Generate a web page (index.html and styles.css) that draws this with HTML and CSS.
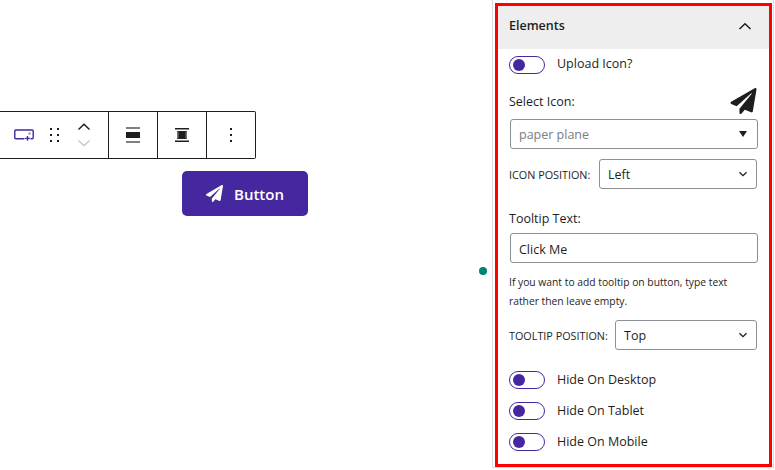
FILE: index.html
```html
<!DOCTYPE html>
<html lang="en">
<head>
<meta charset="utf-8">
<title>Button block editor</title>
<link rel="stylesheet" href="styles.css">
</head>
<body>
<div class="page">
  <main class="canvas">
    <div class="toolbar">
      <div class="tool-group tool-first">
        <svg class="ic-block" width="20" height="12" viewBox="0 0 20 12"><path d="M10.500 9.700H1.800q-1 0-1-1V2q0-1 1-1h16.400q1 0 1 1v6.700q0 1-1 1H16.500" fill="none" stroke="#4527a0" stroke-width="1.400"/><path d="M13.500 7v4.800M11.100 9.400h4.800" stroke="#4527a0" stroke-width="1.400"/><rect x="14.500" y="3.500" width="2" height="2" fill="#8d7cc0"/></svg>
        <svg class="ic-drag" width="9" height="14" viewBox="0 0 9 14"><path d="M0 0h2v2H0zM7 0h2v2H7zM0 6h2v2H0zM7 6h2v2H7zM0 12h2v2H0zM7 12h2v2H7z" fill="#1e1e1e"/></svg>
        <div class="movers">
          <svg width="14" height="8" viewBox="0 0 14 8"><path d="M1.500 6.500 7 1.300l5.500 5.200" fill="none" stroke="#1e1e1e" stroke-width="1.500"/></svg>
          <svg width="14" height="8" viewBox="0 0 14 8"><path d="M1.500 1.500 7 6.700l5.500-5.200" fill="none" stroke="#c8c8c8" stroke-width="1.500"/></svg>
        </div>
      </div>
      <div class="tool-group tool-mid">
        <svg width="16" height="16" viewBox="0 0 16 16"><path d="M1 5h14v6H1z" fill="#1e1e1e"/><path d="M1 1h14M1 15h14" stroke="#1e1e1e" stroke-width="1.500" opacity=".75"/></svg>
      </div>
      <div class="tool-group tool-mid">
        <svg width="16" height="16" viewBox="0 0 16 16"><path d="M3 4h10v8H3z" fill="#1e1e1e"/><path d="M1 1.800h14M1 14.200h14" stroke="#1e1e1e" stroke-width="1.500"/><path d="M3 4.500h1.500v7H3zM11.500 4.500H13v7h-1.500z" fill="#777"/></svg>
      </div>
      <div class="tool-group tool-last">
        <svg width="4" height="16" viewBox="0 0 4 16"><path d="M1 1h2v2H1zM1 7h2v2H1zM1 13h2v2H1z" fill="#1e1e1e"/></svg>
      </div>
    </div>
    <div class="btn-row">
      <a class="cta">
        <svg width="17" height="17" viewBox="0 0 512 512"><path fill="#fff" d="M476 3.200 12.500 270.600c-18.100 10.400-15.800 35.600 2.200 43.200L121 358.400l287.300-253.200c5.500-4.900 13.300 2.600 8.600 8.300L176 407v80.500c0 23.600 28.500 32.900 42.500 15.800L282 426l124.600 52.200c14.200 6 30.400-2.900 33-18.200l72-432C515 7.800 493.300-6.800 476 3.200z"/></svg>
        <span>Button</span>
      </a>
    </div>
  </main>

  <span class="dot"></span>

  <aside class="sidebar">
    <div class="panel">
      <header class="panel-head">
        <span>Elements</span>
        <svg width="14" height="8" viewBox="0 0 14 8"><path d="M1.500 7 7 1.700 12.500 7" fill="none" stroke="#1e1e1e" stroke-width="1.500"/></svg>
      </header>
      <div class="panel-body">
        <div class="toggle-row first"><span class="toggle"></span><span class="toggle-label">Upload Icon?</span></div>

        <div class="icon-head">
          <label class="field-label">Select Icon:</label>
          <svg width="27" height="26" viewBox="0 0 512 512"><path fill="#1e1e1e" d="M476 3.200 12.500 270.600c-18.100 10.400-15.800 35.600 2.200 43.200L121 358.400l287.300-253.200c5.500-4.900 13.300 2.600 8.600 8.300L176 407v80.500c0 23.600 28.500 32.900 42.500 15.800L282 426l124.600 52.200c14.200 6 30.400-2.900 33-18.200l72-432C515 7.800 493.300-6.800 476 3.200z"/></svg>
        </div>
        <div class="box picker"><span>paper plane</span><i class="caret"></i></div>

        <div class="inline-field icon-pos">
          <label class="caps">ICON POSITION:</label>
          <div class="box select">
            <span>Left</span>
            <svg width="10" height="6" viewBox="0 0 10 6"><path d="M1.500 1.200 5 4.700l3.500-3.500" fill="none" stroke="#1e1e1e" stroke-width="1.300"/></svg>
          </div>
        </div>

        <label class="field-label tip-label">Tooltip Text:</label>
        <div class="box text-input">Click Me</div>
        <p class="help">If you want to add tooltip on button, type text rather then leave empty.</p>

        <div class="inline-field tip-pos">
          <label class="caps">TOOLTIP POSITION:</label>
          <div class="box select">
            <span>Top</span>
            <svg width="10" height="6" viewBox="0 0 10 6"><path d="M1.500 1.200 5 4.700l3.500-3.500" fill="none" stroke="#1e1e1e" stroke-width="1.300"/></svg>
          </div>
        </div>

        <div class="toggle-list">
          <div class="toggle-row"><span class="toggle"></span><span class="toggle-label">Hide On Desktop</span></div>
          <div class="toggle-row"><span class="toggle"></span><span class="toggle-label">Hide On Tablet</span></div>
          <div class="toggle-row"><span class="toggle"></span><span class="toggle-label">Hide On Mobile</span></div>
        </div>
      </div>
    </div>
  </aside>
</div>
</body>
</html>
```
FILE: styles.css
```css
* { box-sizing: border-box; }
html, body { margin: 0; height: 100%; background: #fff; overflow: hidden; }
body { font-family: "Open Sans", "Noto Sans", sans-serif; color: #1e1e1e; font-size: 13px; }
.page { position: relative; display: flex; width: 775px; height: 470px; }

.canvas { width: 492px; padding-top: 111px; flex: none; }
.toolbar { display: flex; height: 48px; width: 256px; background: #fff; border: 1px solid #1e1e1e; border-left: 0; border-radius: 0 2px 2px 0; }
.tool-group { display: flex; align-items: center; justify-content: center; border-right: 1px solid #1e1e1e; height: 100%; }
.tool-first { width: 109px; padding-left: 14px; justify-content: flex-start; }
.tool-mid { width: 49px; }
.tool-last { flex: 1; border-right: 0; }
.ic-drag { margin-left: 16px; }
.movers { display: flex; flex-direction: column; gap: 8px; margin-left: 18px; }
.movers svg { display: block; }
.btn-row { margin: 12px 0 0 182px; }
.cta { display: flex; align-items: center; justify-content: center; gap: 11px; width: 126px; height: 45px; background: #4527a0; border-radius: 5px; color: #fff; font-weight: 600; font-size: 15px; }

.dot { position: absolute; left: 479px; top: 267px; width: 8px; height: 8px; border-radius: 50%; background: #00846f; }

.sidebar { flex: none; width: 282px; height: 468px; border: 1px solid #ddd; border-top: 0; padding: 3px 1px 0 2px; }
.panel { height: 464px; border: 3px solid #f00; background: #fff; }
.panel-head { display: flex; align-items: center; justify-content: space-between; height: 43px; background: #eee; padding: 0 17px 4px 11px; font-weight: 600; font-size: 12.500px; }
.panel-body { padding: 0 11px; }

.toggle { display: block; position: relative; width: 36px; height: 18px; border: 1.500px solid #4527a0; border-radius: 9px; background: #fff; flex: none; }
.toggle::before { content: ""; position: absolute; left: 3px; top: 1.500px; width: 12px; height: 12px; border-radius: 50%; background: #4527a0; }
.toggle-row { display: flex; align-items: center; gap: 12px; height: 18px; font-size: 12.500px; }
.toggle-label { margin-top: -2px; }
.toggle-row.first { margin-top: 7px; }
.toggle-row.first .toggle-label { margin-top: -3px; }
.toggle-list { display: flex; flex-direction: column; gap: 13px; margin-top: 21px; }

.icon-head { display: flex; justify-content: space-between; align-items: flex-end; height: 26px; margin-top: 14px; padding-right: 1px; }
.field-label { display: block; font-size: 12.500px; line-height: 18px; }
.icon-head .field-label { margin-bottom: 3px; }

.box { display: flex; align-items: center; border: 1px solid #8c8f94; border-radius: 3px; background: #fff; font-size: 12.500px; }
.picker { height: 30px; margin: 5px 0 0 1px; padding: 0 10px 0 8px; justify-content: space-between; color: #7a7d82; width: 248px; }
.caret { width: 0; height: 0; border-left: 4.500px solid transparent; border-right: 4.500px solid transparent; border-top: 6px solid #1e1e1e; }

.inline-field { display: flex; align-items: center; justify-content: space-between; }
.caps { font-size: 10.800px; font-weight: 500; white-space: nowrap; }
.select { height: 30px; padding: 0 8px 0 8px; justify-content: space-between; }
.icon-pos { margin-top: 10px; width: 248px; }
.icon-pos .select { width: 158px; }
.tip-label { margin-top: 21px; }
.text-input { height: 30px; width: 248px; margin: 5px 0 0 1px; padding: 2px 0 0 8px; }
.help { margin: 10px 0 0; font-size: 10.300px; line-height: 19px; width: 235px; }
.tip-pos { margin-top: 9px; width: 248px; }
.tip-pos .select { width: 142px; }
```
